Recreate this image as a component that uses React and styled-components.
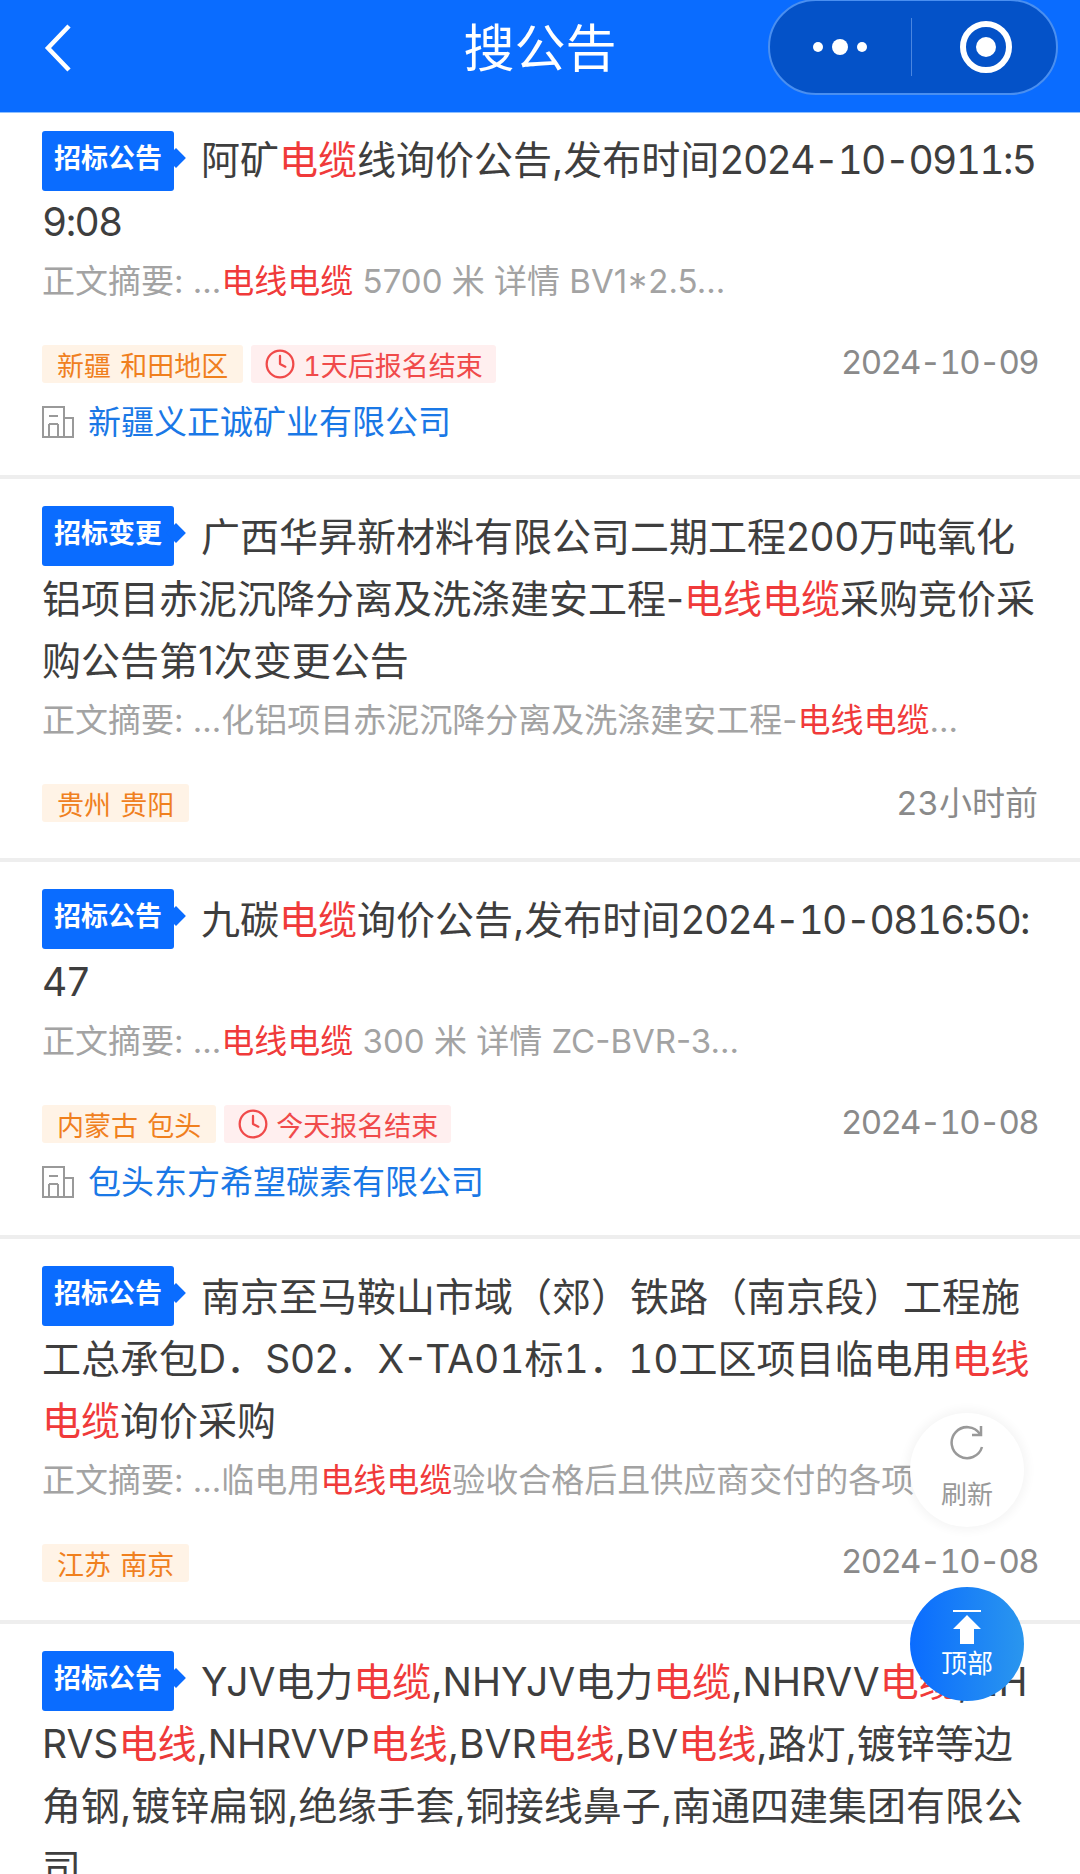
import React from "react";
import styled, { createGlobalStyle } from "styled-components";
import { Clock } from "lucide-react";

const Global = createGlobalStyle`
  html, body { margin: 0; padding: 0; background: #fff; }
  * { box-sizing: border-box; }
`;
const Page = styled.div`
  position: relative;
  width: 1080px;
  height: 1874px;
  overflow: hidden;
  background: #fff;
  font-family: Inter, "Noto Sans CJK SC", "Noto Sans", sans-serif;
`;
const Header = styled.header`
  height: 113px;
  background: #0a6cff;
  border-bottom: 1px solid #8fc0ff;
  display: grid;
  grid-template-columns: 1fr auto 1fr;
  align-items: flex-start;
  color: #fff;
`;
const Back = styled.div`
  padding: 24px 0 0 44px;
  display: flex;
`;
const Title = styled.h1`
  margin: 0;
  font-size: 51px;
  line-height: 98px;
  font-weight: 400;
`;
const Capsule = styled.div`
  justify-self: end;
  margin: -1px 22px 0 0;
  width: 290px;
  height: 96px;
  border-radius: 48px;
  background: #0452c8;
  border: 2px solid #4a8ff0;
  display: flex;
  align-items: center;
`;
const CapsuleCell = styled.div`
  flex: 1;
  height: 58px;
  display: flex;
  align-items: center;
  justify-content: center;
  & + & { border-left: 1px solid #4a86e0; padding-left: 4px; }
`;
const Card = styled.article`
  padding: ${(p) => (p.$first ? "16px" : "27px")} 42px 0;
  height: ${(p) => p.$h}px;
  border-bottom: 4px solid #eeeeee;
`;
const CardTitle = styled.div`
  font-size: 39px;
  line-height: 62px;
  color: #3e3e3e;
  word-break: break-all;
`;
const Badge = styled.span`
  position: relative;
  top: ${(p) => (p.$first ? "2px" : "0")};
  display: inline-block;
  vertical-align: top;
  width: 132px;
  height: 60px;
  margin: 0 27px 0 0;
  background: #0a6cff;
  border-radius: 3px;
  color: #fff;
  font-size: 27px;
  font-weight: 700;
  line-height: 55px;
  text-align: center;
  &::after {
    content: "";
    position: absolute;
    right: -9px;
    top: 20px;
    width: 14px;
    height: 14px;
    background: #0a6cff;
    transform: rotate(45deg);
  }
`;
const Hot = styled.em`
  font-style: normal;
  color: #f03a3a;
`;
const Stamp = styled.span`
  font-variant-numeric: tabular-nums;
  letter-spacing: ${(p) => (p.$loose ? "0" : "-1.65px")};
`;
const Summary = styled.div`
  font-size: 33px;
  line-height: 56px;
  height: 56px;
  color: #a3a3a3;
  white-space: nowrap;
  overflow: hidden;
`;
const MetaRow = styled.div`
  display: flex;
  align-items: center;
  gap: 8px;
  margin-top: 36px;
  height: 38px;
`;
const Tag = styled.span`
  height: 38px;
  padding: 0 ${(p) => (p.$danger ? "13px" : "15px")};
  display: inline-flex;
  align-items: center;
  gap: 7px;
  border-radius: 3px;
  font-size: 27px;
  font-variant-numeric: tabular-nums;
  word-spacing: 2px;
  white-space: pre;
  background: ${(p) => (p.$danger ? "#ffefef" : "#fff3e6")};
  color: ${(p) => (p.$danger ? "#f04a4a" : "#f0801e")};
`;
const DateText = styled.span`
  margin: 0 0 4px auto;
  font-size: 33px;
  font-variant-numeric: tabular-nums;
  letter-spacing: ${(p) => (p.$relative ? "0" : "-1.7px")};
  color: #8a8a8a;
`;
const Company = styled.div`
  display: flex;
  align-items: center;
  gap: 14px;
  margin-top: 16px;
  font-size: 33px;
  line-height: 46px;
  color: #1a78e6;
`;
const Float = styled.div`
  position: absolute;
  left: 910px;
  width: 114px;
  height: 114px;
  border-radius: 50%;
  display: flex;
  flex-direction: column;
  align-items: center;
  font-size: 26px;
  line-height: 30px;
`;
const RefreshBtn = styled(Float)`
  top: 1413px;
  padding-top: 12px;
  gap: 19px;
  background: #fff;
  color: #999;
  box-shadow: 0 0 10px 4px rgba(0, 0, 0, 0.04);
`;
const TopBtn = styled(Float)`
  top: 1587px;
  padding-top: 23px;
  gap: 5px;
  background: linear-gradient(90deg, #0a6cff, #2a96ee);
  color: #fff;
`;

const BuildingIcon = () => (
  <svg width="32" height="32" viewBox="0 0 32 32" fill="none" stroke="#999" strokeWidth="2">
    <path d="M1 31V1H22V31M22 12H31V31M0 31H32M7 10H16M7 18H16M7 18V31M16 18V31" />
  </svg>
);

const items = [
  {
    h: 366, first: true, kind: "招标公告",
    title: <>阿矿<Hot>电缆</Hot>线询价公告,发布时间<Stamp>2024-10-0911:59:08</Stamp></>,
    summary: <>正文摘要: ...<Hot>电线电缆</Hot> 5700 米 详情 BV1*2.5...</>,
    tags: ["新疆 和田地区"], danger: "1天后报名结束", date: "2024-10-09", company: "新疆义正诚矿业有限公司",
  },
  {
    h: 383, kind: "招标变更",
    title: <>广西华昇新材料有限公司二期工程200万吨氧化铝项目赤泥沉降分离及洗涤建安工程-<Hot>电线电缆</Hot>采购竞价采购公告第1次变更公告</>,
    summary: <>正文摘要: ...化铝项目赤泥沉降分离及洗涤建安工程-<Hot>电线电缆</Hot>...</>,
    tags: ["贵州 贵阳"], date: "23小时前", relative: true,
  },
  {
    h: 377, kind: "招标公告",
    title: <>九碳<Hot>电缆</Hot>询价公告,发布时间<Stamp>2024-10-0816:50:47</Stamp></>,
    summary: <>正文摘要: ...<Hot>电线电缆</Hot> 300 米 详情 ZC-BVR-3...</>,
    tags: ["内蒙古 包头"], danger: "今天报名结束", date: "2024-10-08", company: "包头东方希望碳素有限公司",
  },
  {
    h: 385, kind: "招标公告",
    title: <>南京至马鞍山市域（郊）铁路（南京段）工程施工总承包D．S02．<Stamp $loose>X-TA01标1．10</Stamp>工区项目临电用<Hot>电线电缆</Hot>询价采购</>,
    summary: <>正文摘要: ...临电用<Hot>电线电缆</Hot>验收合格后且供应商交付的各项...</>,
    tags: ["江苏 南京"], date: "2024-10-08",
  },
  {
    h: 400, kind: "招标公告",
    title: <>YJV电力<Hot>电缆</Hot>,NHYJV电力<Hot>电缆</Hot>,NHRVV<Hot>电缆</Hot>,NHRVS<Hot>电线</Hot>,NHRVVP<Hot>电线</Hot>,BVR<Hot>电线</Hot>,BV<Hot>电线</Hot>,路灯,镀锌等边角钢,镀锌扁钢,绝缘手套,铜接线鼻子,南通四建集团有限公司</>,
  },
];

export default function App() {
  return (
    <Page>
      <Global />
      <Header>
        <Back>
          <svg width="30" height="48" viewBox="0 0 30 48" fill="none" stroke="#fff" strokeWidth="4.5">
            <path d="M25 2L4 24L25 46" />
          </svg>
        </Back>
        <Title>搜公告</Title>
        <Capsule>
          <CapsuleCell>
            <svg width="60" height="24" viewBox="0 0 60 24" fill="#fff">
              <circle cx="8" cy="12" r="5" />
              <circle cx="30" cy="12" r="8" />
              <circle cx="52" cy="12" r="5" />
            </svg>
          </CapsuleCell>
          <CapsuleCell>
            <svg width="56" height="56" viewBox="0 0 56 56">
              <circle cx="28" cy="28" r="23" fill="none" stroke="#fff" strokeWidth="6" />
              <circle cx="28" cy="28" r="10" fill="#fff" />
            </svg>
          </CapsuleCell>
        </Capsule>
      </Header>
      {items.map((it, i) => (
        <Card key={i} $h={it.h} $first={it.first}>
          <CardTitle>
            <Badge $first={it.first}>{it.kind}</Badge>
            {it.title}
          </CardTitle>
          {it.summary && <Summary>{it.summary}</Summary>}
          {it.date && (
            <MetaRow>
              {it.tags.map((t) => <Tag key={t}>{t}</Tag>)}
              {it.danger && (
                <Tag $danger>
                  <Clock size={32} strokeWidth={1.7} />
                  {it.danger}
                </Tag>
              )}
              <DateText $relative={it.relative}>{it.date}</DateText>
            </MetaRow>
          )}
          {it.company && (
            <Company>
              <BuildingIcon />
              {it.company}
            </Company>
          )}
        </Card>
      ))}
      <RefreshBtn>
        <svg width="36" height="36" viewBox="0 0 36 36" fill="none" stroke="#999" strokeWidth="2.5">
          <path d="M31 9A15.500 15.500 0 1 0 33 22" />
          <path d="M32 1V10H23" />
        </svg>
        刷新
      </RefreshBtn>
      <TopBtn>
        <svg width="30" height="34" viewBox="0 0 30 34" fill="#fff">
          <rect x="1" y="0" width="28" height="2" />
          <path d="M15 5L29 19H22V34H8V19H1Z" />
        </svg>
        顶部
      </TopBtn>
    </Page>
  );
}
